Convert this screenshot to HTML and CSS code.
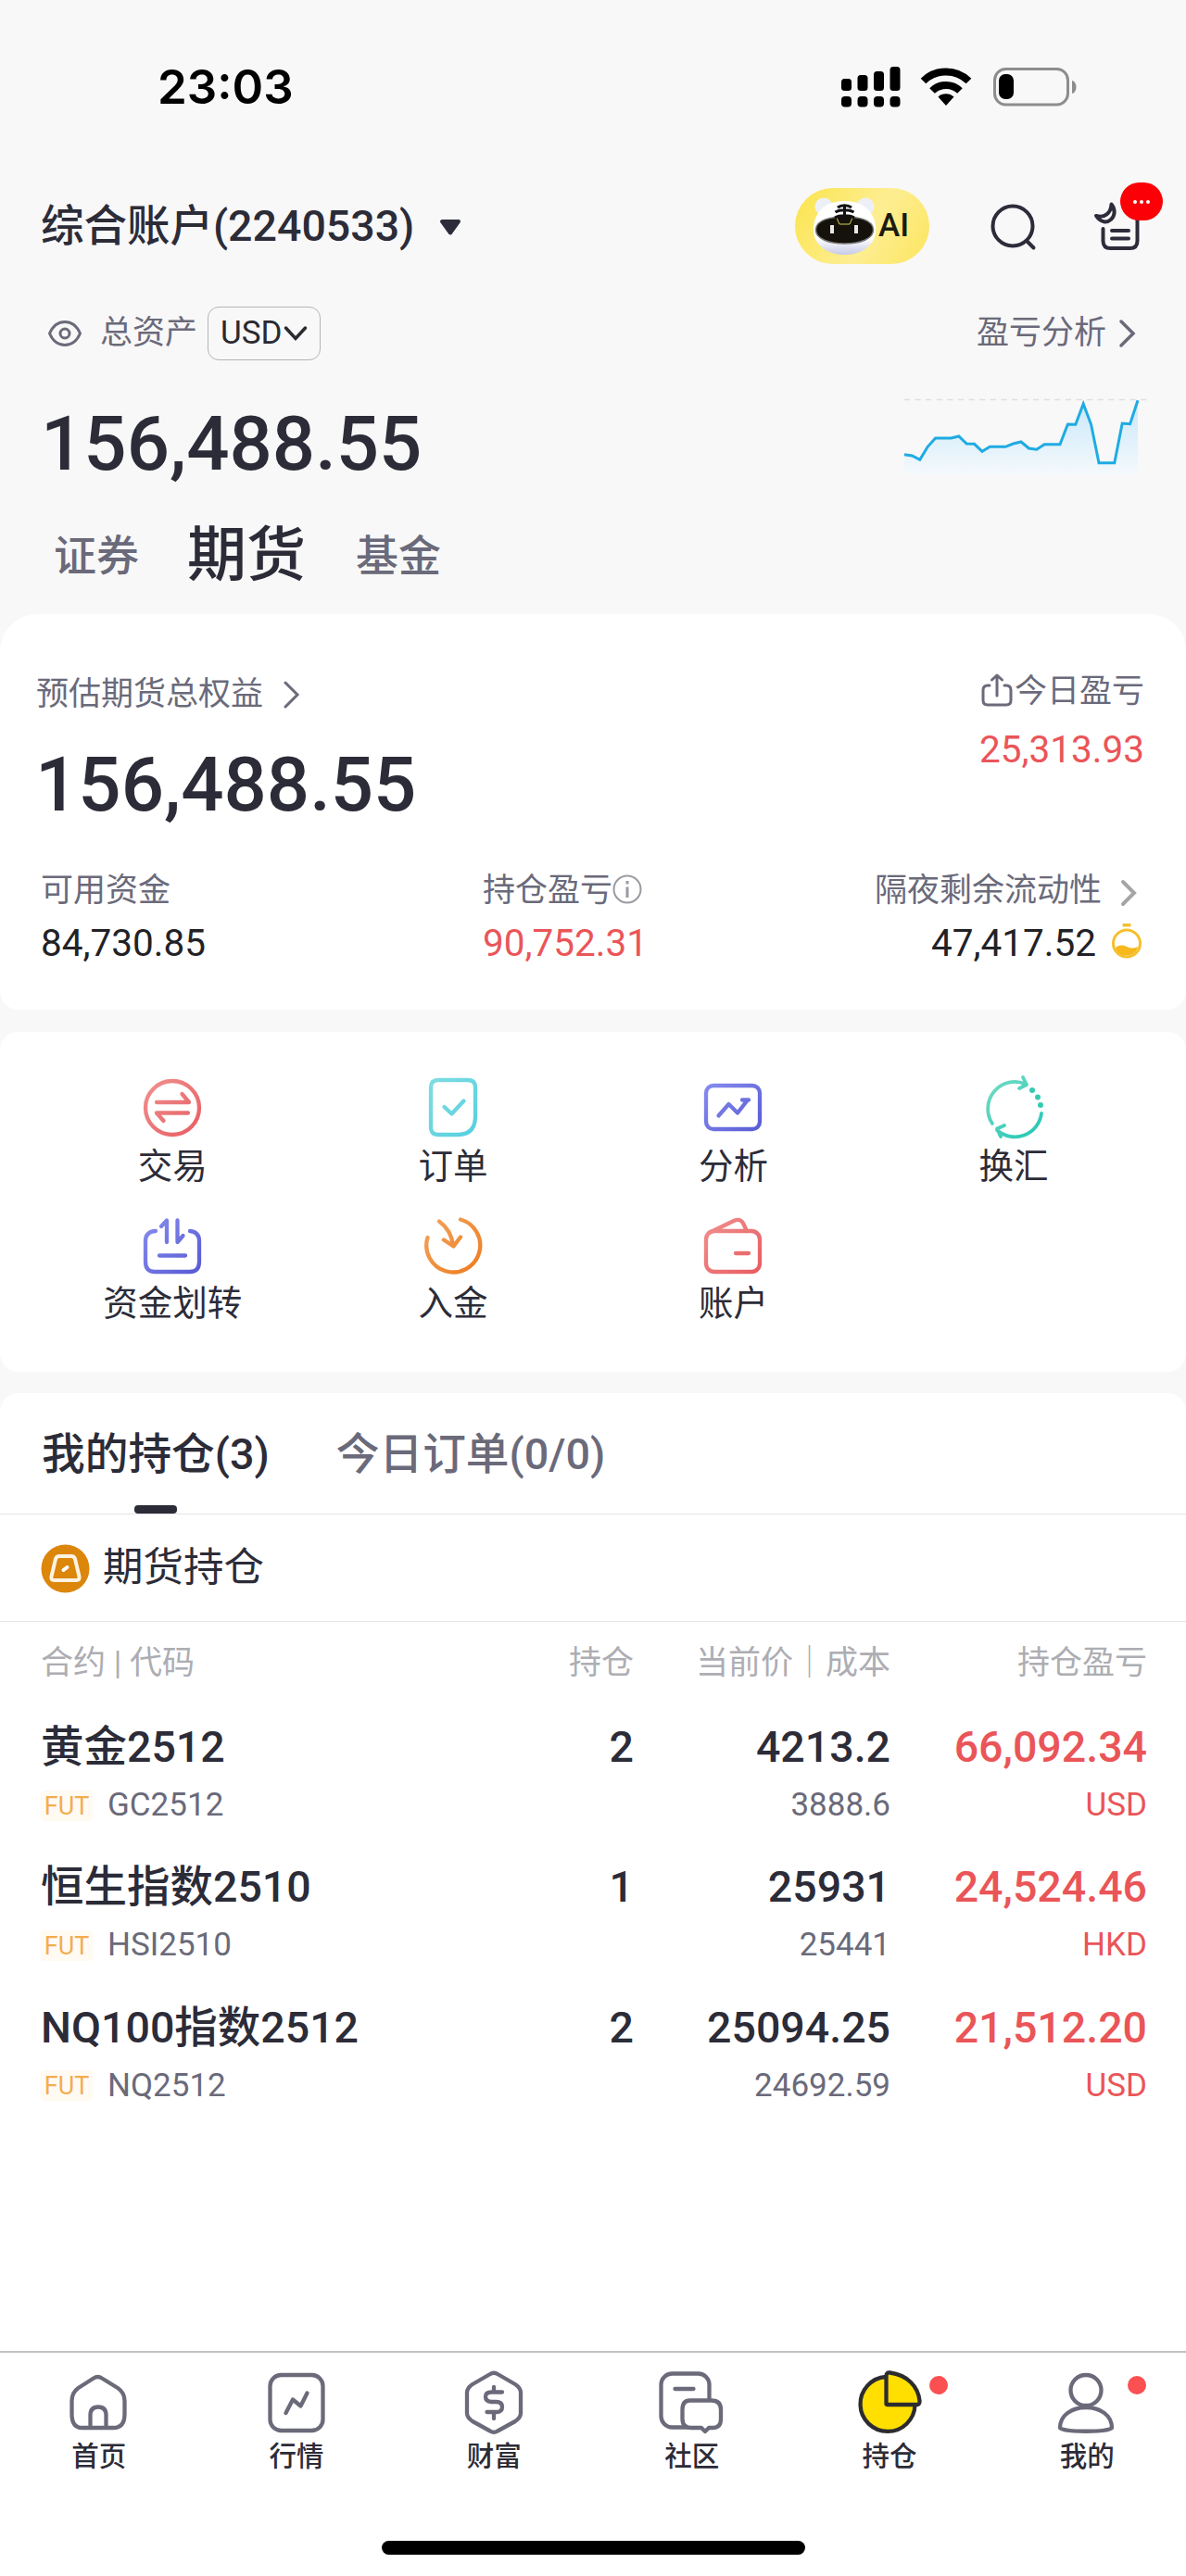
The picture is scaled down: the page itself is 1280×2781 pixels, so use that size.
FILE: index.html
```html
<!DOCTYPE html>
<html lang="zh-CN">
<head>
    <meta charset="UTF-8">
    <meta name="viewport" content="width=device-width, initial-scale=1.0">
    <title>期货持仓</title>
    <link rel="stylesheet" href="styles.css">
</head>
<body>

<!-- Shared gradients -->
<svg class="defs" width="0" height="0">
    <defs>
        <linearGradient id="red" x1="0" y1="0" x2="64" y2="64" gradientUnits="userSpaceOnUse"><stop offset="0" stop-color="#f09390"/><stop offset="1" stop-color="#e85a60"/></linearGradient>
        <linearGradient id="cyan" x1="0" y1="0" x2="64" y2="64" gradientUnits="userSpaceOnUse"><stop offset="0" stop-color="#82dde2"/><stop offset="1" stop-color="#52cfe0"/></linearGradient>
        <linearGradient id="blue" x1="0" y1="0" x2="64" y2="64" gradientUnits="userSpaceOnUse"><stop offset="0" stop-color="#8a90f0"/><stop offset="1" stop-color="#5558d2"/></linearGradient>
        <linearGradient id="green" x1="0" y1="0" x2="64" y2="64" gradientUnits="userSpaceOnUse"><stop offset="0" stop-color="#7adcc4"/><stop offset="1" stop-color="#1fc7b4"/></linearGradient>
        <linearGradient id="orange" x1="0" y1="0" x2="64" y2="64" gradientUnits="userSpaceOnUse"><stop offset="0" stop-color="#f2a662"/><stop offset="1" stop-color="#ee7a1c"/></linearGradient>
        <linearGradient id="area" x1="0" y1="0" x2="0" y2="1"><stop offset="0" stop-color="#c9e7fb"/><stop offset="1" stop-color="#f4f9fb"/></linearGradient>
        <linearGradient id="face" x1="0" y1="0" x2="0" y2="1"><stop offset="0.7" stop-color="#fff"/><stop offset="1" stop-color="#c6cae6"/></linearGradient>
    </defs>
</svg>

<header class="header">
    <div class="status">
        <span class="time">23:03</span>
        <div class="status-icons">
            <svg width="64" height="44" viewBox="0 0 64 44">
                <rect x="0" y="13" width="11" height="13" rx="3.5"/>
                <rect x="17.500" y="9" width="11" height="17" rx="3.500"/>
                <rect x="35" y="5" width="11" height="21" rx="3.500"/>
                <rect x="52.500" y="0" width="11" height="26" rx="3.500"/>
                <rect x="0" y="32" width="11" height="11.500" rx="4"/>
                <rect x="17.500" y="32" width="11" height="11.500" rx="4"/>
                <rect x="35" y="32" width="11" height="11.500" rx="4"/>
                <rect x="52.500" y="32" width="11" height="11.500" rx="4"/>
            </svg>
            <svg class="wifi" width="56" height="42" viewBox="0 0 56 42">
                <path d="M3.500 14.500a35 35 0 0 1 49 0M13 25a21.500 21.500 0 0 1 30 0" fill="none" stroke="#000" stroke-width="8"/>
                <path d="M19.500 31.500a12.500 12.500 0 0 1 17 0L28 41z"/>
            </svg>
            <svg width="92" height="42" viewBox="0 0 92 42">
                <rect x="1.500" y="1.500" width="79" height="38.500" rx="12" fill="none" stroke="#8d8d8d" stroke-width="3"/>
                <rect x="6" y="7" width="16" height="27" rx="7"/>
                <path d="M85 14c6 1 6 13 0 14z" fill="#8d8d8d"/>
            </svg>
        </div>
    </div>

    <div class="account">
        <span class="account-name">综合账户(2240533)</span>
        <svg class="caret" width="26" height="20" viewBox="0 0 26 20"><path d="M4 3h18l-9 12.500z" fill="#2c2c3a" stroke="#2c2c3a" stroke-width="4" stroke-linejoin="round"/></svg>
        <div class="ai">
            <svg width="72" height="66" viewBox="0 0 72 66">
                <circle cx="13" cy="12" r="9.500" fill="#eef0f8"/>
                <circle cx="58" cy="12" r="9.500" fill="#eef0f8"/>
                <path d="M35.500 6C56 6 69 18 69 37c0 17-15 27-33.500 27S2 54 2 37C2 18 15 6 35.500 6z" fill="url(#face)"/>
                <path d="M35.500 23c14 0 31 3 31 14 0 10-14 15-31 15S4.500 47 4.500 37c0-11 17-14 31-14z" fill="#15120c" stroke="#777" stroke-width="1.500"/>
                <path d="M26 22h19l-4 9H30z" fill="#15120c" stroke="#d8cf4a" stroke-width="1"/>
                <path d="M28 13c4-3 11-3 15 0M25.500 18c5-3 15-3 20 0M25 24c5-3 16-3 21 0M35.500 12v16" fill="none" stroke="#111" stroke-width="3"/>
                <rect x="20" y="32" width="4" height="9" fill="#e8e8e8"/>
                <rect x="46" y="32" width="4" height="9" fill="#e8e8e8"/>
            </svg>
            <span>AI</span>
        </div>
        <svg class="search" width="52" height="52" viewBox="0 0 52 52" fill="none" stroke="#2c2c3a" stroke-width="4" stroke-linecap="round"><circle cx="25" cy="25" r="21.500"/><path d="M40.500 41.500l7 7"/></svg>
        <div class="news">
            <svg width="50" height="54" viewBox="0 0 50 54" fill="none" stroke="#2c2c3a" stroke-width="4" stroke-linecap="round" stroke-linejoin="round">
                <path d="M18.500 3.500c10 12-6 28-16.500 12.500 9 3 16-3 16.500-12.500z"/>
                <path d="M9.500 30v13q0 8 8 8h21q8 0 8-8V17M19 32h18M19 40.500h18"/>
            </svg>
            <span class="badge"><i></i><i></i><i></i></span>
        </div>
    </div>

    <div class="assets">
        <svg width="38" height="30" viewBox="0 0 38 30" fill="none" stroke="#6a6a7a" stroke-width="3"><path d="M2.500 15C6 7 12 2.500 19 2.500S32 7 35.500 15C32 23 26 27.500 19 27.500S6 23 2.500 15z"/><circle cx="19" cy="15" r="5"/></svg>
        <span class="assets-label">总资产</span>
        <span class="currency">USD<svg width="26" height="18" viewBox="0 0 26 18" fill="none" stroke="#2a2a30" stroke-width="3.500" stroke-linecap="round"><path d="M2.500 3L13 14.500 23.500 3"/></svg></span>
        <span class="analysis">盈亏分析</span>
        <svg width="20" height="32" viewBox="0 0 20 32" fill="none" stroke="#6a6a7a" stroke-width="3.500" stroke-linecap="round"><path d="M3 3l13 13L3 29"/></svg>
    </div>

    <div class="total">
        <span class="amount">156,488.55</span>
        <svg width="264" height="88" viewBox="0 0 264 88">
            <path d="M0 7.500h264" stroke="#dedede" stroke-width="1.500" stroke-dasharray="6 5.600"/>
            <path d="M0 66.700L8.400 68 16.800 72.300 25.200 58.300 33.600 49H50.400L58.800 47 67.200 55 75.600 55.300 84 63.300 92.400 58.300H109.200L117.600 55 126 53 134.400 60 142.800 61.300 151.200 55.700H168L176.400 34 184.800 34.300 193.200 12 201.600 34.300 210 75.700H226.800L235.200 33 243.600 33.700 252 8.300V88H0z" fill="url(#area)"/>
            <path d="M0 66.700L8.400 68 16.800 72.300 25.200 58.300 33.600 49H50.400L58.800 47 67.200 55 75.600 55.300 84 63.300 92.400 58.300H109.200L117.600 55 126 53 134.400 60 142.800 61.300 151.200 55.700H168L176.400 34 184.800 34.300 193.200 12 201.600 34.300 210 75.700H226.800L235.200 33 243.600 33.700 252 8.300" fill="none" stroke="#1fabe2" stroke-width="3"/>
        </svg>
    </div>

    <nav class="kinds">
        <span>证券</span>
        <span class="kind-active">期货</span>
        <span>基金</span>
    </nav>
</header>

<section class="card equity">
    <div class="equity-top">
        <div>
            <div class="equity-label">预估期货总权益<svg width="20" height="30" viewBox="0 0 20 30" fill="none" stroke="#6a6a7a" stroke-width="3" stroke-linecap="round"><path d="M3 2l13 13L3 28"/></svg></div>
            <div class="amount equity-amount">156,488.55</div>
        </div>
        <div class="today">
            <div class="today-label"><svg width="34" height="36" viewBox="0 0 34 36" fill="none" stroke="#6a6a7a" stroke-width="3" stroke-linecap="round" stroke-linejoin="round"><path d="M9 13H7q-5 0-5 5v11q0 5 5 5h20q5 0 5-5V18q0-5-5-5h-2M17 24V2M11.500 7L17 2l5.500 5"/></svg>今日盈亏</div>
            <div class="today-value up">25,313.93</div>
        </div>
    </div>
    <div class="stats">
        <div>
            <div class="stat-label">可用资金</div>
            <div class="stat-value">84,730.85</div>
        </div>
        <div>
            <div class="stat-label">持仓盈亏<svg class="info" width="32" height="32" viewBox="0 0 32 32" fill="none" stroke="#9a9aa2"><circle cx="16" cy="16" r="14.500" stroke-width="2"/><path d="M16 13.500V25M16 7v3.500" stroke-width="3"/></svg></div>
            <div class="stat-value up">90,752.31</div>
        </div>
        <div class="stat-right">
            <div class="stat-label">隔夜剩余流动性<svg class="stat-arrow" width="20" height="30" viewBox="0 0 20 30" fill="none" stroke="#a5a5a5" stroke-width="4" stroke-linecap="round"><path d="M3 3l12 12L3 27"/></svg></div>
            <div class="stat-value">47,417.52<svg class="flask" width="34" height="40" viewBox="0 0 34 40"><rect x="12.500" y="1" width="9" height="3.500" rx="1" fill="#f5c02c"/><circle cx="17" cy="22.500" r="14.500" fill="none" stroke="#f5c02c" stroke-width="3"/><path d="M5 27c4-3 8-3 12-1s8 2 12 0c-1 6-6 9.500-12 9.500S6 33 5 27z" fill="#f7b81d"/></svg></div>
        </div>
    </div>
</section>

<section class="card actions">
    <div class="action">
        <svg width="64" height="64" viewBox="0 0 64 64" stroke="url(#red)"><circle cx="32" cy="32" r="29"/><path d="M15 26h35L42.500 17M49 37.500H15L22.500 46"/></svg>
        交易
    </div>
    <div class="action">
        <svg width="64" height="64" viewBox="0 0 64 64" stroke="url(#cyan)"><path d="M16 2h32q8 0 8 8v31q0 20-19 20H16q-8 0-8-8V10q0-8 8-8z"/><path d="M22.500 31l8 7.500 13-14"/></svg>
        订单
    </div>
    <div class="action">
        <svg width="64" height="64" viewBox="0 0 64 64" stroke="url(#blue)"><rect x="3" y="8" width="58" height="47" rx="8"/><path d="M16.500 40.500L27.500 28l9.500 9.500L47.500 24M42 23.500h7"/></svg>
        分析
    </div>
    <div class="action">
        <svg width="64" height="64" viewBox="0 0 64 64" stroke="url(#green)"><path d="M9 49A29 29 0 0 1 45 6.500M42-1l4 8-8 4M62 38A29 29 0 0 1 14 56M22 51l-8 3.500L18 63" stroke-width="3.800"/><g fill="#35cbb2" stroke="none"><circle cx="52" cy="13" r="3"/><circle cx="58" cy="20.500" r="3"/><circle cx="61" cy="29" r="3"/></g></svg>
        换汇
    </div>
    <div class="action">
        <svg width="64" height="64" viewBox="0 0 64 64" stroke="url(#blue)"><path d="M14 17h-1Q3 18 3 28v22q0 11 10 11h38q10 0 10-11V28q0-10-10-11M20 12l6-6.500V29M37.500 5.500V29l6-7M18 43.500h28"/></svg>
        资金划转
    </div>
    <div class="action">
        <svg width="64" height="64" viewBox="0 0 64 64" stroke="url(#orange)"><path d="M4.500 24A29 29 0 1 0 40 4.500M17 6.500Q30 16 32 32.500M22 26.500l10.500 7 7.500-10"/></svg>
        入金
    </div>
    <div class="action">
        <svg width="64" height="64" viewBox="0 0 64 64" stroke="url(#red)"><rect x="3" y="17" width="58" height="44" rx="9"/><path d="M6 19L34 5.500q6-2 9 3l4 8.500M35 41h14"/></svg>
        账户
    </div>
</section>

<section class="card positions">
    <div class="tabs">
        <span class="tab tab-active">我的持仓(3)</span>
        <span class="tab">今日订单(0/0)</span>
    </div>
    <div class="group">
        <svg width="53" height="53" viewBox="0 0 53 53"><circle cx="26.500" cy="26.500" r="26" fill="#dc860c"/><path d="M20 13h13q3 0 4 3l4.500 19q.8 4-3 4h-24q-3.800 0-3-4L16 16q1-3 4-3z" fill="none" stroke="#fdf3e0" stroke-width="4"/><path d="M24.500 28l4-3" stroke="#fff" stroke-width="4" stroke-linecap="round"/></svg>
        期货持仓
    </div>
    <div class="row thead">
        <span>合约 | 代码</span>
        <span>持仓</span>
        <span>当前价｜成本</span>
        <span>持仓盈亏</span>
    </div>
    <div class="row">
        <div><div class="main">黄金2512</div><div class="sub"><em class="tag">FUT</em>GC2512</div></div>
        <div class="main">2</div>
        <div><div class="main">4213.2</div><div class="sub">3888.6</div></div>
        <div class="up"><div class="main">66,092.34</div><div class="sub">USD</div></div>
    </div>
    <div class="row">
        <div><div class="main">恒生指数2510</div><div class="sub"><em class="tag">FUT</em>HSI2510</div></div>
        <div class="main">1</div>
        <div><div class="main">25931</div><div class="sub">25441</div></div>
        <div class="up"><div class="main">24,524.46</div><div class="sub">HKD</div></div>
    </div>
    <div class="row">
        <div><div class="main">NQ100指数2512</div><div class="sub"><em class="tag">FUT</em>NQ2512</div></div>
        <div class="main">2</div>
        <div><div class="main">25094.25</div><div class="sub">24692.59</div></div>
        <div class="up"><div class="main">21,512.20</div><div class="sub">USD</div></div>
    </div>
</section>

<footer class="tabbar">
    <div class="tabbar-items">
        <div class="item">
            <svg width="72" height="72" viewBox="0 0 72 72"><path d="M30 8.500q4.500-3 9 0L56 19q7.500 5 7.500 14v14q0 15-12 15h-34Q6.500 62 6.500 47V33q0-9 7-14zM26.500 62V48.500q0-9 8.500-9t8.500 9V62"/></svg>
            首页
        </div>
        <div class="item">
            <svg width="72" height="72" viewBox="0 0 72 72"><rect x="7.500" y="5" width="57" height="60" rx="12"/><path d="M24.500 46L32 31.500l8.500 7L47.500 24.500"/></svg>
            行情
        </div>
        <div class="item">
            <svg width="72" height="72" viewBox="0 0 72 72"><path d="M32 4q4-2.500 8 0l19 11q6 4 6 9v22q0 5-6 9L40 65.500q-4 2.500-8 0L13 55q-6-4-6-9V24q0-5 6-9zM45 23.500H33.500q-6.500 0-6.500 5t6.500 5.500h5q6.500 0 6.500 5.500t-6.500 5.500H28.500M36 18v5M36 46v6"/></svg>
            财富
        </div>
        <div class="item">
            <svg width="72" height="72" viewBox="3 0 72 72"><rect x="5.500" y="3.500" width="52" height="58" rx="12"/><path d="M36.500 32.500H60q10 0 10 10v10q0 9.500-9 9.500h-4l-4 4-4-4H38.500q-10 0-10-9.500V42.500q0-10 8-10z" fill="#fff"/><path d="M20.500 20h20"/></svg>
            社区
        </div>
        <div class="item item-active">
            <svg width="72" height="72" viewBox="0 0 72 72"><path d="M32 7A29.500 29.500 0 1 0 63.500 37.500z" /><path d="M32.500 36.500V6q0-4 4-3.500C55 5 67 17 68.500 33q.3 4-3 4H34q-1.500 0-1.500-1.500z"/></svg>
            持仓
            <i class="dot"></i>
        </div>
        <div class="item">
            <svg width="72" height="72" viewBox="0 0 72 72"><ellipse cx="35" cy="21.500" rx="16.500" ry="16.500"/><path d="M35 40c16 0 28 9 28 22 0 5-56 5-56 0 0-13 12-22 28-22z"/></svg>
            我的
            <i class="dot"></i>
        </div>
    </div>
    <div class="home-bar"></div>
</footer>

</body>
</html>
```

FILE: styles.css
```css
* {
    box-sizing: border-box;
}
body {
    margin: 0;
    width: 1280px;
    background: #f8f8f8;
    color: #2c2c38;
    font-family: Roboto, "Noto Sans CJK SC", sans-serif;
    line-height: 1.2;
}
svg {
    display: block;
    flex: none;
    overflow: visible;
}
.defs {
    position: absolute;
}
.up {
    color: #ea5558;
}

/* Header */
.status {
    display: flex;
    align-items: center;
    height: 188px;
    padding: 0 116px 0 170px;
}
.time {
    font: 600 51px/60px Inter, sans-serif;
    color: #000;
}
.status-icons {
    display: flex;
    align-items: center;
    margin-left: auto;
}
.wifi {
    margin: 0 23px 0 21px;
}
.account {
    display: flex;
    align-items: center;
    height: 112px;
    padding: 0 49px 0 44px;
}
.account-name {
    font-size: 46.500px;
    font-weight: 500;
    line-height: 60px;
}
.caret {
    margin: 4px 0 0 26px;
}
.ai {
    display: flex;
    align-items: center;
    width: 145px;
    height: 82px;
    margin-left: auto;
    padding-left: 18px;
    border-radius: 41px;
    background: linear-gradient(120deg, #fbe44c, #fdee93 55%, #fce55e);
    color: #1d1a10;
    font-size: 35px;
    font-weight: 500;
}
.search {
    margin: 2px 0 0 65px;
}
.news {
    position: relative;
    margin-left: 61px;
}
.badge {
    position: absolute;
    left: 28px;
    top: -20px;
    display: flex;
    align-items: center;
    justify-content: center;
    gap: 3px;
    width: 46px;
    height: 41px;
    border-radius: 21px;
    background: #fb0007;
}
.badge i {
    width: 4px;
    height: 4px;
    border-radius: 2px;
    background: #fff;
}
.assets {
    display: flex;
    align-items: center;
    height: 120px;
    padding: 0 53px 0 51px;
    color: #6a6a7a;
    font-size: 35px;
}
.assets-label {
    margin-left: 19px;
}
.currency {
    display: flex;
    align-items: center;
    gap: 2px;
    width: 122px;
    height: 58px;
    margin-left: 11px;
    padding-left: 13px;
    border: 1px solid #b4b4b8;
    border-radius: 12px;
    color: #2a2a30;
}
.analysis {
    margin: 0 13px 0 auto;
}
.total {
    display: flex;
    align-items: flex-end;
    justify-content: space-between;
    height: 92px;
    padding: 0 40px 0 44px;
}
.amount {
    font-size: 81.500px;
    font-weight: 500;
    line-height: 82px;
}
.total .amount {
    height: 74px;
}
.kinds {
    display: flex;
    align-items: center;
    height: 151px;
    padding: 26px 0 0 58px;
    color: #6a6a7a;
    font-size: 46px;
    font-weight: 500;
}
.kind-active {
    margin: 0 54px 0 52px;
    color: #2c2c38;
    font-size: 64px;
}

/* Cards */
.card {
    background: #fff;
    border-radius: 20px;
}
.equity {
    height: 427px;
    padding: 56px 45px 0 39px;
    border-radius: 40px 40px 20px 20px;
    color: #6a6a7a;
    font-size: 35px;
}
.equity-top {
    display: flex;
    justify-content: space-between;
}
.equity-label {
    display: flex;
    align-items: center;
    gap: 21px;
    height: 62px;
}
.equity-amount {
    margin: 25px 0 0 -1px;
    color: #2c2c38;
}
.today {
    text-align: right;
}
.today-label {
    display: flex;
    align-items: center;
    justify-content: flex-end;
    gap: 2px;
    height: 56px;
}
.today-label svg {
    margin-top: -5px;
}
.today-value {
    margin-top: 4px;
    font-size: 40.500px;
    line-height: 60px;
}
.stats {
    display: grid;
    grid-template-columns: 477px 1fr auto;
    margin: 49px 0 0 5px;
}
.stat-label {
    display: flex;
    align-items: center;
    height: 50px;
}
.stat-value {
    display: flex;
    align-items: center;
    height: 50px;
    margin-top: 6px;
    font-size: 40.500px;
}
.stat-value:not(.up) {
    color: #222226;
}
.stat-right .stat-label,
.stat-right .stat-value {
    justify-content: flex-end;
}
.info {
    margin-top: -5px;
}
.stat-arrow {
    margin: 4px 6px 0 20px;
}
.flask {
    margin: -4px 2px 0 16px;
}

/* Shortcuts */
.actions {
    display: grid;
    grid-template-columns: repeat(4, 302.600px);
    align-content: start;
    row-gap: 28px;
    height: 367px;
    margin-top: 24px;
    padding: 50px 35px 0;
}
.action {
    display: flex;
    flex-direction: column;
    align-items: center;
    gap: 6px;
    font-size: 37.500px;
    line-height: 50px;
}
.action svg {
    fill: none;
    stroke-width: 4.300;
    stroke-linecap: round;
    stroke-linejoin: round;
}

/* Positions */
.positions {
    height: 1034px;
    margin-top: 23px;
    border-radius: 20px 20px 0 0;
}
.tabs {
    display: flex;
    gap: 72px;
    height: 131px;
    padding-left: 45px;
    border-bottom: 1px solid #e4e4e6;
}
.tab {
    position: relative;
    color: #6a6a7a;
    font-size: 46.700px;
    font-weight: 500;
    line-height: 132px;
}
.tab-active {
    color: #2c2c38;
}
.tab-active::after {
    content: "";
    position: absolute;
    left: 50%;
    bottom: 0;
    width: 46px;
    height: 9px;
    margin-left: -23px;
    border-radius: 4px;
    background: #2c2c38;
}
.group {
    display: flex;
    align-items: center;
    gap: 14px;
    height: 116px;
    padding: 1px 0 0 44px;
    border-bottom: 1px solid #e4e4e6;
    font-size: 43.500px;
}
.row {
    display: grid;
    grid-template-columns: 1fr 120px 277px 277px;
    height: 151.300px;
    padding: 17px 42px 0 44px;
}
.row > * + * {
    text-align: right;
}
.thead {
    height: 88px;
    padding-top: 0;
    color: #adadb3;
    font-size: 35px;
    line-height: 90px;
}
.main {
    font-size: 46.500px;
    font-weight: 500;
    line-height: 60px;
}
.sub {
    margin-top: 8px;
    font-size: 35px;
    line-height: 50px;
}
.row > :not(.up) .sub {
    color: #6a6a7a;
}
.sub:has(.tag) {
    display: flex;
    align-items: center;
}
.tag {
    width: 56px;
    height: 33px;
    margin-right: 16px;
    border-radius: 4px;
    background: #fffaf2;
    color: #f3ad4c;
    font-size: 27px;
    font-style: normal;
    line-height: 34px;
    text-align: center;
}

/* Bottom bar */
.tabbar {
    height: 243px;
    border-top: 2px solid #c2c2c4;
    background: #fff;
}
.tabbar-items {
    display: grid;
    grid-template-columns: repeat(6, 1fr);
    height: 203px;
    padding-top: 19px;
}
.item {
    position: relative;
    display: flex;
    flex-direction: column;
    align-items: center;
    font-size: 29.500px;
    font-weight: 500;
    line-height: 40px;
}
.item svg {
    margin-bottom: 1px;
    fill: none;
    stroke: #6a6a7a;
    stroke-width: 4.300;
    stroke-linecap: round;
    stroke-linejoin: round;
}
.item-active svg {
    fill: #ffdf00;
    stroke: #2c2c30;
}
.dot {
    position: absolute;
    left: 150px;
    top: 6px;
    width: 20px;
    height: 20px;
    border-radius: 50%;
    background: #fb5052;
}
.home-bar {
    width: 457px;
    height: 15px;
    margin: 0 auto;
    border-radius: 8px;
    background: #000;
}
```
